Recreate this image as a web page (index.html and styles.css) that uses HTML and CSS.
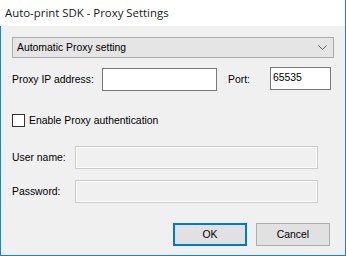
FILE: index.html
```html
<!DOCTYPE html>
<html lang="en">
<head>
  <meta charset="UTF-8">
  <title>Auto-print SDK - Proxy Settings</title>
  <link rel="stylesheet" href="styles.css">
</head>
<body>
  <div class="window">
    <div class="titlebar">Auto-print SDK - Proxy Settings</div>
    <div class="content">
      <div class="combo">
        <span>Automatic Proxy setting</span>
        <svg class="chevron" width="9" height="5" viewBox="0 0 9 5">
          <polyline points="0.5,0.5 4.5,4.5 8.5,0.5" fill="none" stroke="#606060" stroke-width="1"/>
        </svg>
      </div>

      <div class="ip-row">
        <label class="lbl">Proxy IP address:</label>
        <div class="textbox"></div>
        <label class="lbl port-lbl">Port:</label>
        <div class="textbox port">65535</div>
      </div>

      <div class="check-row">
        <span class="checkbox"></span>
        <span>Enable Proxy authentication</span>
      </div>

      <div class="auth-row first">
        <label class="lbl">User name:</label>
        <div class="textbox disabled"></div>
      </div>
      <div class="auth-row">
        <label class="lbl">Password:</label>
        <div class="textbox disabled"></div>
      </div>

      <div class="buttons">
        <div class="btn default">OK</div>
        <div class="btn">Cancel</div>
      </div>
    </div>
  </div>
</body>
</html>
```

FILE: styles.css
```css
body {
  margin: 0;
  background: #ffffff;
}

.window {
  width: 346px;
  height: 256px;
  box-sizing: border-box;
  border: 1px solid #1883d7;
  border-top: none;
  display: flex;
  flex-direction: column;
  font-family: "Liberation Sans", Arial, sans-serif;
  font-size: 10.4px;
  color: #000;
}

/* Title bar */
.titlebar {
  height: 26px;
  flex: none;
  background: #fff;
  font-family: "Open Sans", "Noto Sans", sans-serif;
  font-size: 11.4px;
  line-height: 26px;
  padding-left: 4px;
  color: #1a1a1a;
  margin-left: -1px;
  border-left: 1px solid #fff;
}

.content {
  flex: 1;
  background: #f0f0f0;
  padding: 11px 11px 0 11px;
}

/* Combo box */
.combo {
  height: 21px;
  box-sizing: border-box;
  border: 1px solid #acacac;
  background: #e5e5e5;
  display: flex;
  align-items: center;
  justify-content: space-between;
  padding: 0 6px 0 4px;
}

.chevron {
  display: block;
}

/* IP row */
.ip-row {
  display: grid;
  grid-template-columns: 90px 115px 53px 61px;
  align-items: center;
  margin-top: 10px;
}

.port-lbl {
  margin-left: 11px;
}

.textbox {
  height: 23px;
  box-sizing: border-box;
  border: 1px solid #7a7a7a;
  background: #fff;
}

.textbox.port {
  padding: 4px 0 0 2px;
  line-height: 12px;
  position: relative;
  top: -1px;
}

/* Checkbox */
.check-row {
  display: flex;
  align-items: center;
  gap: 4px;
  margin-top: 23px;
}

.checkbox {
  width: 13px;
  height: 13px;
  box-sizing: border-box;
  border: 1px solid #333;
  background: #fff;
}

/* Auth rows */
.auth-row {
  display: grid;
  grid-template-columns: 63px 243px;
  align-items: center;
  margin-top: 11px;
}

.auth-row.first {
  margin-top: 19px;
}

.textbox.disabled {
  border-color: #cccccc;
  background: #f0f0f0;
  box-shadow: inset 0 0 0 1px #fff;
}

.lbl {
  color: #000;
}

/* Buttons */
.buttons {
  display: flex;
  justify-content: flex-end;
  gap: 9px;
  margin-top: 20px;
  padding-right: 4px;
}

.btn {
  width: 74px;
  height: 23px;
  box-sizing: border-box;
  border: 1px solid #adadad;
  background: #e1e1e1;
  display: flex;
  align-items: center;
  justify-content: center;
}

.btn.default {
  border: 2px solid #0078d7;
}
```
